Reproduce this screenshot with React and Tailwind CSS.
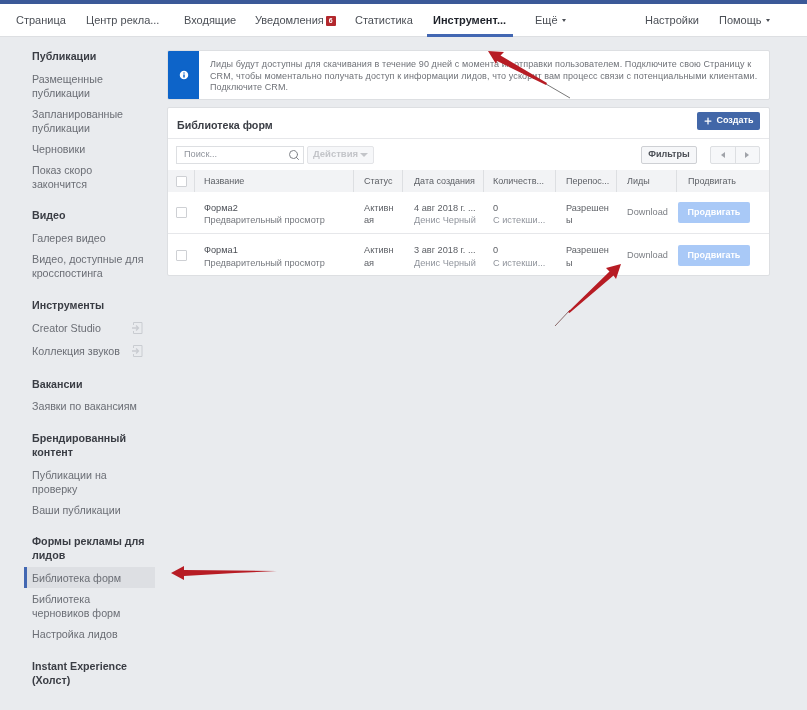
import React from "react";
import { Search, Plus, Info } from "lucide-react";

const font = "font-['Liberation_Sans',Arial,sans-serif]";

function Caret({ className = "" }) {
  return <span className={`inline-block w-0 h-0 border-l-[2.5px] border-r-[2.5px] border-t-[3px] border-l-transparent border-r-transparent border-t-[#4b4f56] ${className}`} />;
}

function EnterIcon() {
  return (
    <svg width="11" height="12" viewBox="0 0 11 12" fill="none" stroke="#c9ccd1" strokeWidth="1" className="mr-[12px] shrink-0">
      <path d="M1.5 3V.5h8.5v11H1.5V9" />
      <path d="M0 6h6M4 3.5 6.5 6 4 8.5" strokeWidth="1.3" />
    </svg>
  );
}

function NavBar() {
  return (
    <div className="h-[33px] bg-white border-b border-[#dddfe2] flex items-center pl-4 pt-[1px] text-[11px] text-[#4b4f56]">
      <span className="w-[70px]">Страница</span>
      <span className="w-[98px]">Центр рекла...</span>
      <span className="w-[71px]">Входящие</span>
      <span className="flex items-center w-[100px]">
        Уведомления
        <span className="ml-[2px] w-[10px] h-[10px] bg-[#b3282d] rounded-[1px] text-white text-[7px] leading-[10px] text-center font-bold">6</span>
      </span>
      <span className="w-[78px]">Статистика</span>
      <span className="relative w-[102px] font-bold text-[#1d2129] self-stretch flex items-center">
        Инструмент...
        <span className="absolute left-[-6px] w-[86px] bottom-[-1px] h-[3px] bg-[#4267b2]" />
      </span>
      <span className="flex items-center gap-[4px]">Ещё <Caret /></span>
      <span className="ml-auto w-[74px]">Настройки</span>
      <span className="flex items-center gap-[4px] w-[88px] whitespace-nowrap">Помощь <Caret /></span>
    </div>
  );
}

const sections = [
  ["Публикации", [["Размещенные", "публикации"], ["Запланированные", "публикации"], ["Черновики"], ["Показ скоро", "закончится"]]],
  ["Видео", [["Галерея видео"], ["Видео, доступные для", "кросспостинга"]]],
  ["Инструменты", [["Creator Studio"], ["Коллекция звуков"]], true],
  ["Вакансии", [["Заявки по вакансиям"]]],
  ["Брендированный|контент", [["Публикации на", "проверку"], ["Ваши публикации"]]],
  ["Формы рекламы для|лидов", [["Библиотека форм"], ["Библиотека", "черновиков форм"], ["Настройка лидов"]]],
  ["Instant Experience|(Холст)", []],
];

function Sidebar() {
  return (
    <aside className="w-[155px] shrink-0 pl-6 pt-[12px] text-[10.7px] leading-[14px]">
      {sections.map(([title, items, icons]) => (
        <div key={title} className="mb-[14.25px]">
          <div className="pl-2 font-bold text-[#3a3d44] mb-[5px]">
            {title.split("|").map((t) => <div key={t}>{t}</div>)}
          </div>
          {items.map((lines) => {
            const active = lines[0] === "Библиотека форм";
            return (
              <div
                key={lines.join()}
                className={`flex items-center justify-between text-[#6b6e75] ${icons ? "py-[4.5px]" : "py-[3.5px]"} ${active ? "bg-[#dddfe3] border-l-[3px] border-[#4267b2] pl-[5px] text-[#4b4f56]" : "pl-2"}`}
              >
                <div>{lines.map((l) => <div key={l}>{l}</div>)}</div>
                {icons && <EnterIcon />}
              </div>
            );
          })}
        </div>
      ))}
    </aside>
  );
}

function Banner() {
  return (
    <div className="h-[50px] bg-white border border-[#dddfe2] rounded-[2px] flex overflow-hidden">
      <div className="w-[31px] bg-[#0d64c9] flex items-center justify-center shrink-0">
        <Info size={12} color="#0d64c9" fill="#ffffff" strokeWidth={3} />
      </div>
      <p className="pl-[11px] pt-[8px] text-[9px] leading-[11.5px] tracking-[0.1px] whitespace-nowrap text-[#6f7278]">
        Лиды будут доступны для скачивания в течение 90 дней с момента их отправки пользователем. Подключите свою Страницу к<br />
        CRM, чтобы моментально получать доступ к информации лидов, что ускорит вам процесс связи с потенциальными клиентами.<br />
        Подключите CRM.
      </p>
    </div>
  );
}

const cols = "grid grid-cols-[27px_159px_49px_81px_72px_61px_60px_92px]";

function Checkbox() {
  return <span className="block w-[11px] h-[11px] border border-[#ced0d4] bg-white rounded-[1px]" />;
}

function Row({ name, date, border }) {
  return (
    <div className={`${cols} h-[42px] items-center text-[9.2px] leading-[12.5px] text-[#5d6066] ${border ? "border-b border-[#e6e7ea]" : ""}`}>
      <div className="pl-[8px]"><Checkbox /></div>
      <div className="pl-[9px] pt-[3px]">
        <div className="text-[#4b4f56]">{name}</div>
        <div className="text-[#74777d]">Предварительный просмотр</div>
      </div>
      <div className="pl-[10px] pt-[3px]"><div>Активн</div><div>ая</div></div>
      <div className="pl-[11px] pt-[3px]">
        <div>{date} авг 2018 г. ...</div>
        <div className="text-[#90949c]">Денис Черный</div>
      </div>
      <div className="pl-[9px] pt-[3px]">
        <div>0</div>
        <div className="text-[#90949c]">С истекши...</div>
      </div>
      <div className="pl-[10px] pt-[3px]"><div>Разрешен</div><div>ы</div></div>
      <div className="pl-[10px] text-[#7a7d83]">Download</div>
      <div className="pl-[1px]">
        <div className="w-[72px] h-[21px] bg-[#a9c9f7] rounded-[2px] text-white font-bold text-[9px] flex items-center justify-center">Продвигать</div>
      </div>
    </div>
  );
}

function Library() {
  const hc = "h-full flex items-center border-r border-[#dddfe2]";
  return (
    <div className="mt-[7px] bg-white border border-[#dddfe2] rounded-[2px] h-[169px]">
      <div className="h-[31px] border-b border-[#e6e7ea] flex items-start justify-between px-[9px]">
        <span className="mt-[10px] text-[10.7px] leading-[14px] font-bold text-[#3a3d44]">Библиотека форм</span>
        <span className="mt-[4px] w-[63px] h-[18px] bg-[#4267a8] rounded-[2px] text-white text-[9px] font-bold flex items-center justify-center gap-[3px]">
          <Plus size={10} strokeWidth={3} /> Создать
        </span>
      </div>
      <div className="h-[31px] flex items-center pl-[8px] pr-[9px]">
        <div className="w-[128px] h-[18px] border border-[#dddfe2] flex items-center justify-between pl-[7px] pr-[3px] text-[9.2px] text-[#90949c]">
          Поиск...
          <Search size={12} color="#7f8288" />
        </div>
        <div className="ml-[3px] w-[67px] h-[18px] border border-[#e3e4e7] bg-[#f6f7f9] rounded-[2px] flex items-center justify-center gap-[2px] text-[9.5px] font-bold text-[#c3c5c9]">
          Действия
          <span className="w-0 h-0 border-l-[4px] border-r-[4px] border-t-[4px] border-l-transparent border-r-transparent border-t-[#c3c5c9]" />
        </div>
        <div className="ml-auto w-[56px] h-[18px] border border-[#ced0d4] bg-[#f6f7f9] rounded-[2px] flex items-center justify-center text-[9px] font-bold text-[#4b4f56]">Фильтры</div>
        <div className="ml-[13px] w-[50px] h-[18px] border border-[#dddfe2] bg-[#f6f7f9] rounded-[2px] flex">
          <span className="flex-1 border-r border-[#dddfe2] flex items-center justify-center">
            <span className="w-0 h-0 border-t-[3.5px] border-b-[3.5px] border-r-[4px] border-t-transparent border-b-transparent border-r-[#a0a3a9]" />
          </span>
          <span className="flex-1 flex items-center justify-center">
            <span className="w-0 h-0 border-t-[3.5px] border-b-[3.5px] border-l-[4px] border-t-transparent border-b-transparent border-l-[#a0a3a9]" />
          </span>
        </div>
      </div>
      <div className={`${cols} h-[22px] bg-[#f2f3f5] items-center text-[9px] text-[#5d6066]`}>
        <div className={`pl-[8px] ${hc}`}><Checkbox /></div>
        <div className={`pl-[9px] pt-[1px] ${hc}`}>Название</div>
        <div className={`pl-[10px] pt-[1px] ${hc}`}>Статус</div>
        <div className={`pl-[11px] pt-[1px] ${hc}`}>Дата создания</div>
        <div className={`pl-[9px] pt-[1px] ${hc}`}>Количеств...</div>
        <div className={`pl-[10px] pt-[1px] ${hc}`}>Перепос...</div>
        <div className={`pl-[10px] pt-[1px] ${hc}`}>Лиды</div>
        <div className="pl-[11px] pt-[1px] h-full flex items-center">Продвигать</div>
      </div>
      <Row name="Форма2" date="4" border />
      <Row name="Форма1" date="3" />
    </div>
  );
}

function Arrows() {
  return (
    <svg className="absolute left-0 top-0 pointer-events-none" width="807" height="710" viewBox="0 0 807 710">
      <path d="M546 84 L570 98" stroke="#555" strokeWidth="0.8" />
      <path d="M570 310 L555 326" stroke="#8a6a6a" strokeWidth="1" />
      <g fill="#b71c24">
        <path d="M488 51 L504 52 L500.5 55.5 L547 83 L546 85 L497 61 L496 64 Z" />
        <path d="M621 264 L606 268 L609.5 271.5 L568 312 L569.5 313 L613.5 275.5 L616 279 Z" />
        <path d="M171 573 L184 566 L184 570 L235 570.5 L277 571 L235 573 L184 576 L184 580 Z" />
      </g>
    </svg>
  );
}

export default function App() {
  return (
    <div className={`relative w-[807px] h-[710px] overflow-hidden bg-[#e9ebee] ${font} blur-[0.4px]`}>
      <div className="h-[4px] bg-[#3b5998]" />
      <NavBar />
      <div className="flex">
        <Sidebar />
        <main className="ml-[12px] w-[603px] pt-[13px]">
          <Banner />
          <Library />
        </main>
      </div>
      <Arrows />
    </div>
  );
}
